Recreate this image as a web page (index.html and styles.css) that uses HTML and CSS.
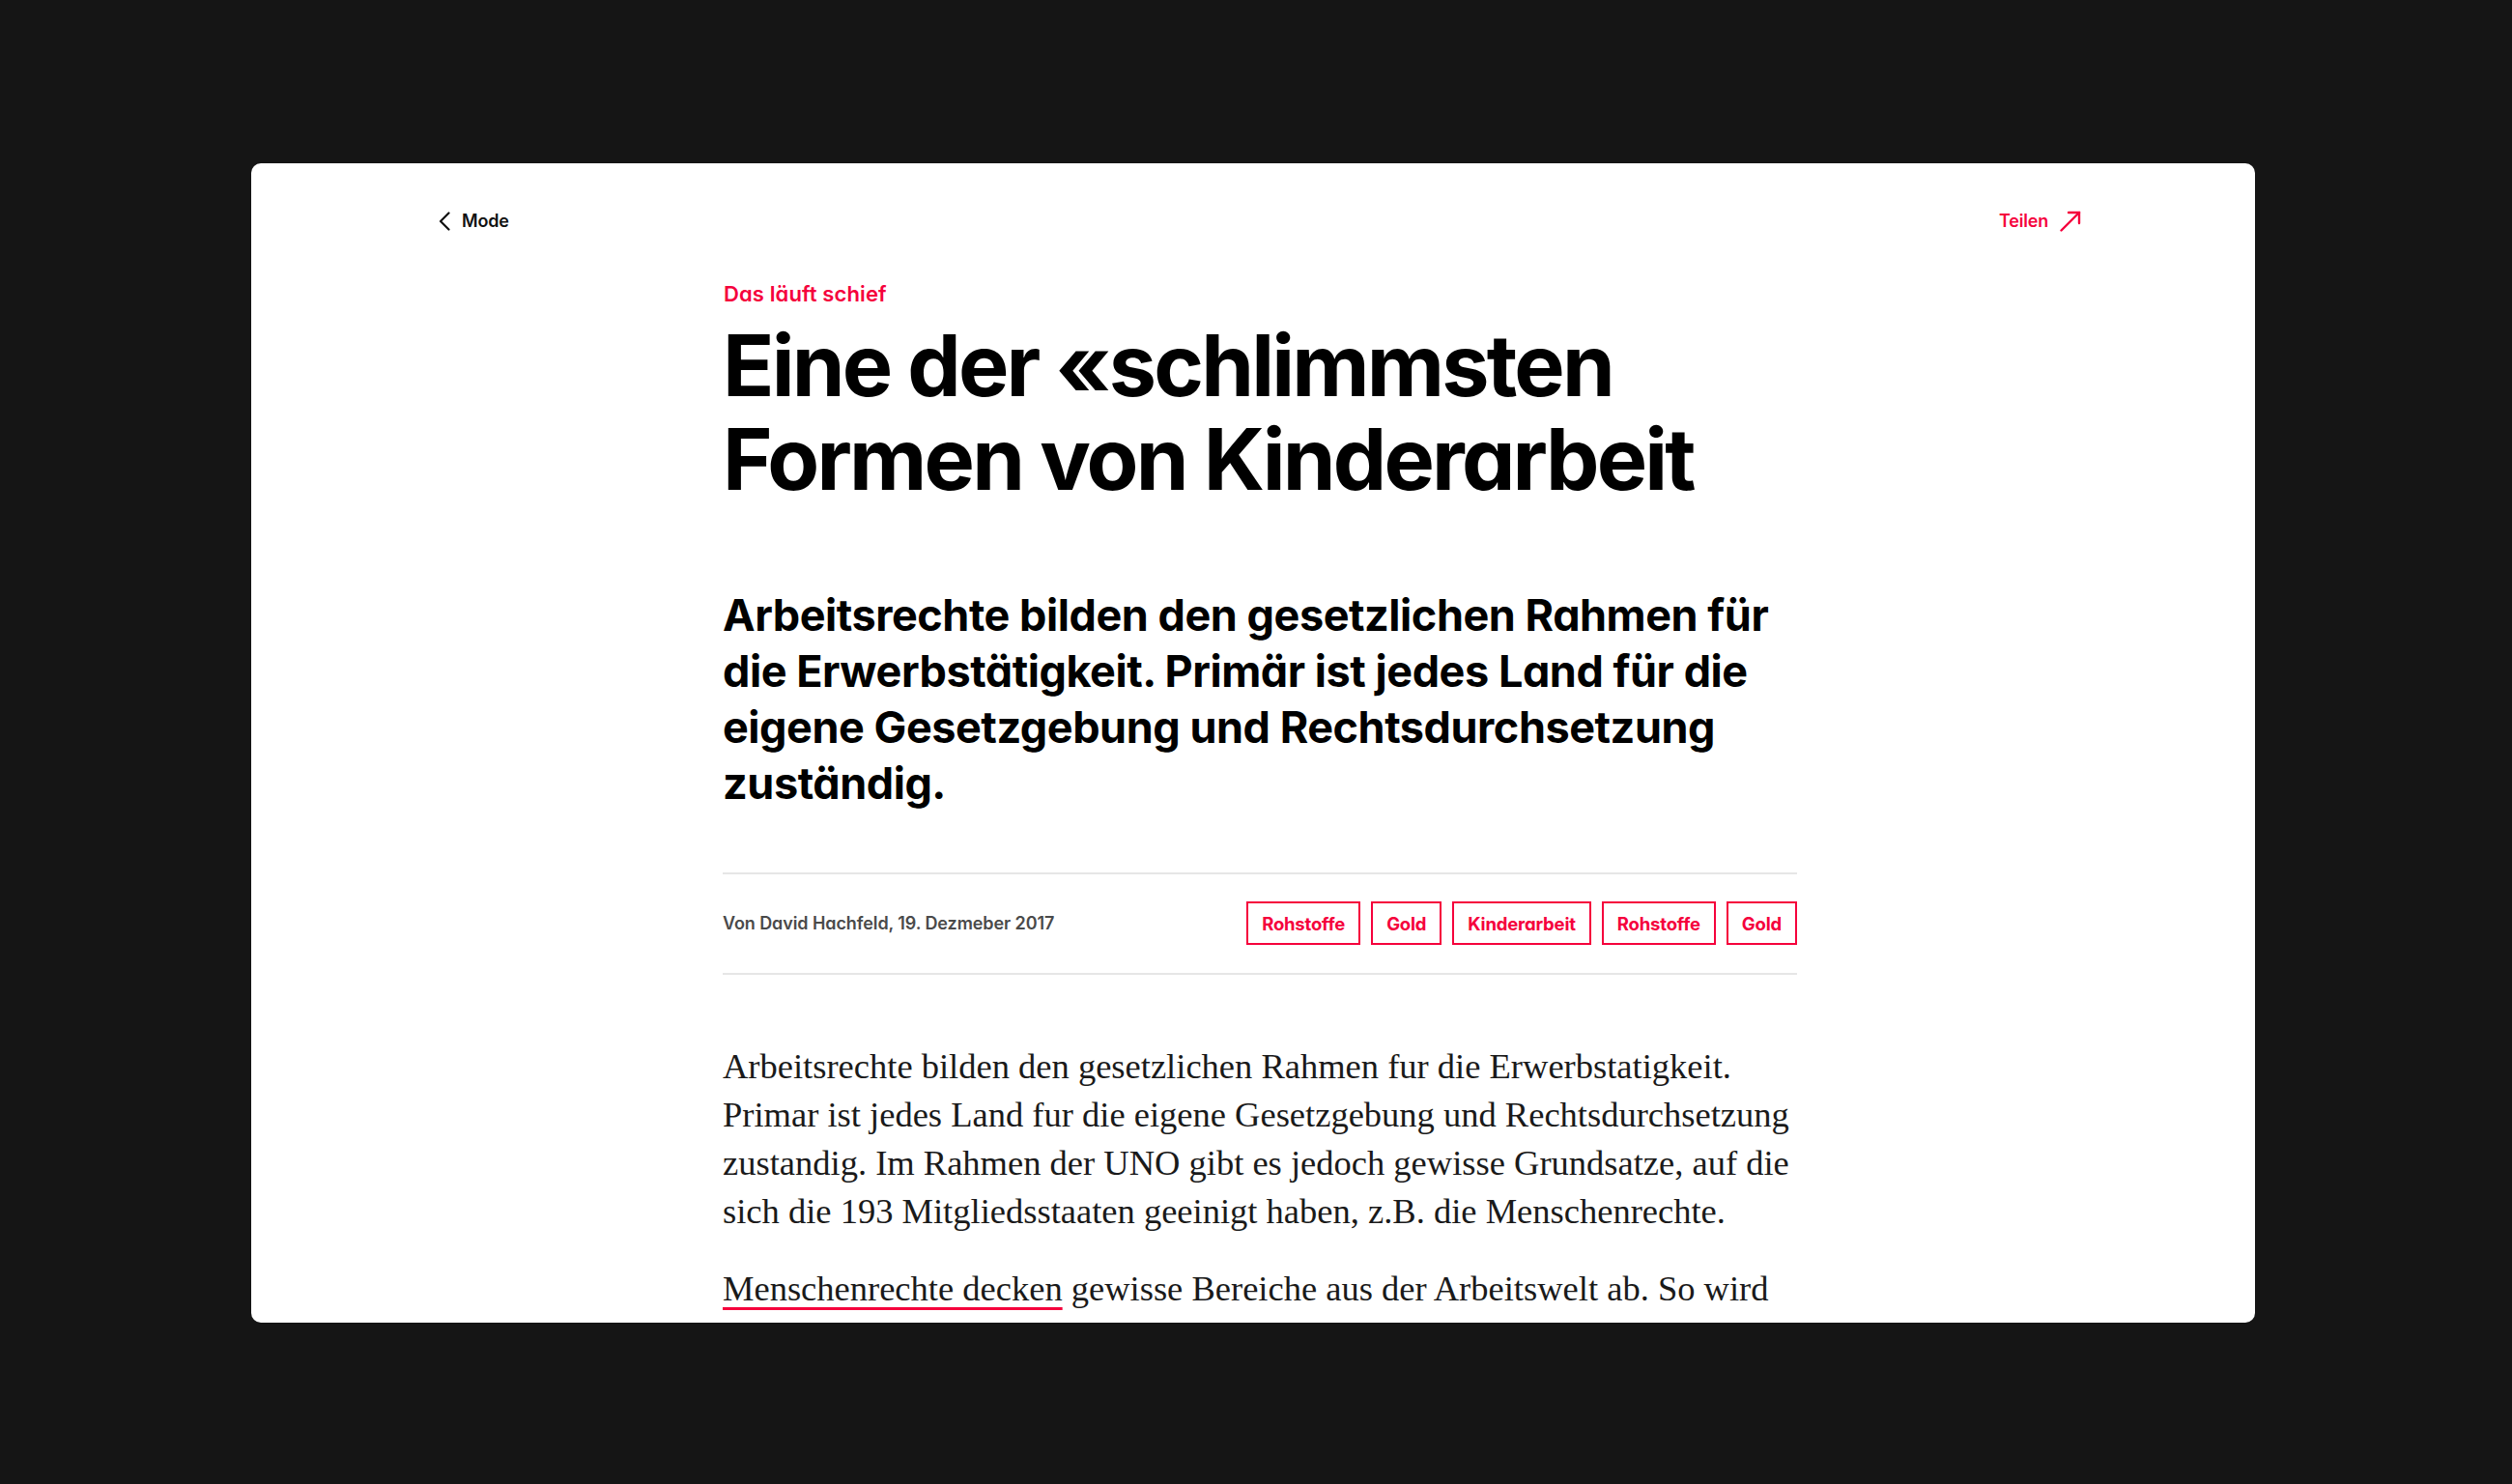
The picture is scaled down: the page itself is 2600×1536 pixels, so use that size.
FILE: index.html
```html
<!DOCTYPE html>
<html lang="de">
<head>
<meta charset="utf-8">
<title>Eine der «schlimmsten Formen von Kinderarbeit</title>
<link rel="stylesheet" href="styles.css">
</head>
<body>
<main class="card">
  <header class="topbar">
    <a class="back" href="#">
      <svg class="chev" width="14" height="20" viewBox="0 0 14 20" aria-hidden="true"><polyline points="11.5,1.5 3,10 11.5,18.5" fill="none" stroke="#111" stroke-width="2.2" stroke-linecap="round" stroke-linejoin="round"/></svg>
      <span>Mode</span>
    </a>
    <a class="share" href="#">
      <span>Teilen</span>
      <svg class="arrow" width="22" height="22" viewBox="0 0 22 22" aria-hidden="true"><line x1="1.5" y1="20.5" x2="20" y2="2" stroke="#f5003c" stroke-width="2.4" stroke-linecap="round"/><polyline points="9,2 20,2 20,13" fill="none" stroke="#f5003c" stroke-width="2.4" stroke-linecap="round" stroke-linejoin="miter"/></svg>
    </a>
  </header>

  <article class="article">
    <p class="kicker">Das läuft schief</p>
    <h1 class="title">Eine der «schlimmsten Formen von Kinderarbeit</h1>
    <p class="lead">Arbeitsrechte bilden den gesetzlichen Rahmen für die Erwerbstätigkeit. Primär ist jedes Land für die eigene Gesetzgebung und Rechtsdurchsetzung zuständig.</p>

    <div class="meta">
      <span class="byline">Von David Hachfeld, 19. Dezmeber 2017</span>
      <ul class="tags">
        <li class="tag">Rohstoffe</li>
        <li class="tag">Gold</li>
        <li class="tag">Kinderarbeit</li>
        <li class="tag">Rohstoffe</li>
        <li class="tag">Gold</li>
      </ul>
    </div>

    <div class="body">
      <p>Arbeitsrechte bilden den gesetzlichen Rahmen fur die Erwerbstatigkeit.<br>Primar ist jedes Land fur die eigene Gesetzgebung und Rechtsdurchsetzung<br>zustandig. Im Rahmen der UNO gibt es jedoch gewisse Grundsatze, auf die<br>sich die 193 Mitgliedsstaaten geeinigt haben, z.B. die Menschenrechte.</p>
      <p><a class="link" href="#">Menschenrechte decken</a> gewisse Bereiche aus der Arbeitswelt ab. So wird<br>das Recht auf gerechte und befriedigende Arbeitsbedingungen garantiert.</p>
    </div>
  </article>
</main>
</body>
</html>
```

FILE: styles.css
```css
* { box-sizing: border-box; }

html, body {
  margin: 0;
  padding: 0;
}

body {
  background: #151515;
  padding: 169px 0 0 260px;
  font-family: Inter, "Noto Sans", sans-serif;
  font-feature-settings: "cv11" 1;
  color: #000;
}

.card {
  width: 2074px;
  height: 1200px;
  background: #fff;
  border-radius: 10px;
  overflow: hidden;
}

.topbar {
  display: flex;
  justify-content: space-between;
  align-items: center;
  padding: 50px 180px 0 193px;
  height: 70px;
}

.back, .share {
  display: flex;
  align-items: center;
  text-decoration: none;
  font-size: 18px;
  line-height: 20px;
  font-weight: 600;
  letter-spacing: -0.01em;
}

.back { color: #111; gap: 11px; }
.share { color: #f5003c; gap: 12px; }

.chev { display: block; }
.arrow { display: block; }

.article {
  width: 1112px;
  margin: 51px 0 0 488px;
}

.kicker {
  margin: 0;
  font-size: 22px;
  line-height: 28px;
  font-weight: 600;
  letter-spacing: 0.005em;
  color: #f5003c;
  padding-left: 1px;
}

.title {
  margin: 12px 0 0;
  font-size: 88px;
  line-height: 97px;
  font-weight: 700;
  letter-spacing: -0.032em;
  width: 1060px;
}

.lead {
  margin: 84px 0 0;
  font-size: 45px;
  line-height: 58px;
  font-weight: 700;
  letter-spacing: -0.01em;
}

.meta {
  margin-top: 63px;
  border-top: 2px solid #e6e6e6;
  border-bottom: 2px solid #e6e6e6;
  padding: 28px 0 29px;
  display: flex;
  justify-content: space-between;
  align-items: center;
}

.byline {
  font-size: 18px;
  font-weight: 600;
  color: #4a4a4a;
  letter-spacing: -0.005em;
}

.tags {
  list-style: none;
  margin: 0;
  padding: 0;
  display: flex;
  gap: 11px;
}

.tag {
  height: 45px;
  display: flex;
  align-items: center;
  padding: 0 14px;
  border: 2px solid #f5003c;
  color: #f5003c;
  font-size: 18.5px;
  font-weight: 700;
  letter-spacing: -0.01em;
}

.body {
  margin-top: 70px;
  width: 1160px;
  font-family: "Liberation Serif", "Times New Roman", serif;
  font-feature-settings: "onum" 1;
  font-size: 36.5px;
  line-height: 50px;
  color: #1a1a1a;
}

.body p {
  margin: 0 0 30px;
}

.link {
  color: inherit;
  text-decoration: underline;
  text-decoration-color: #f5003c;
  text-decoration-thickness: 3px;
  text-underline-offset: 7px;
}
```
